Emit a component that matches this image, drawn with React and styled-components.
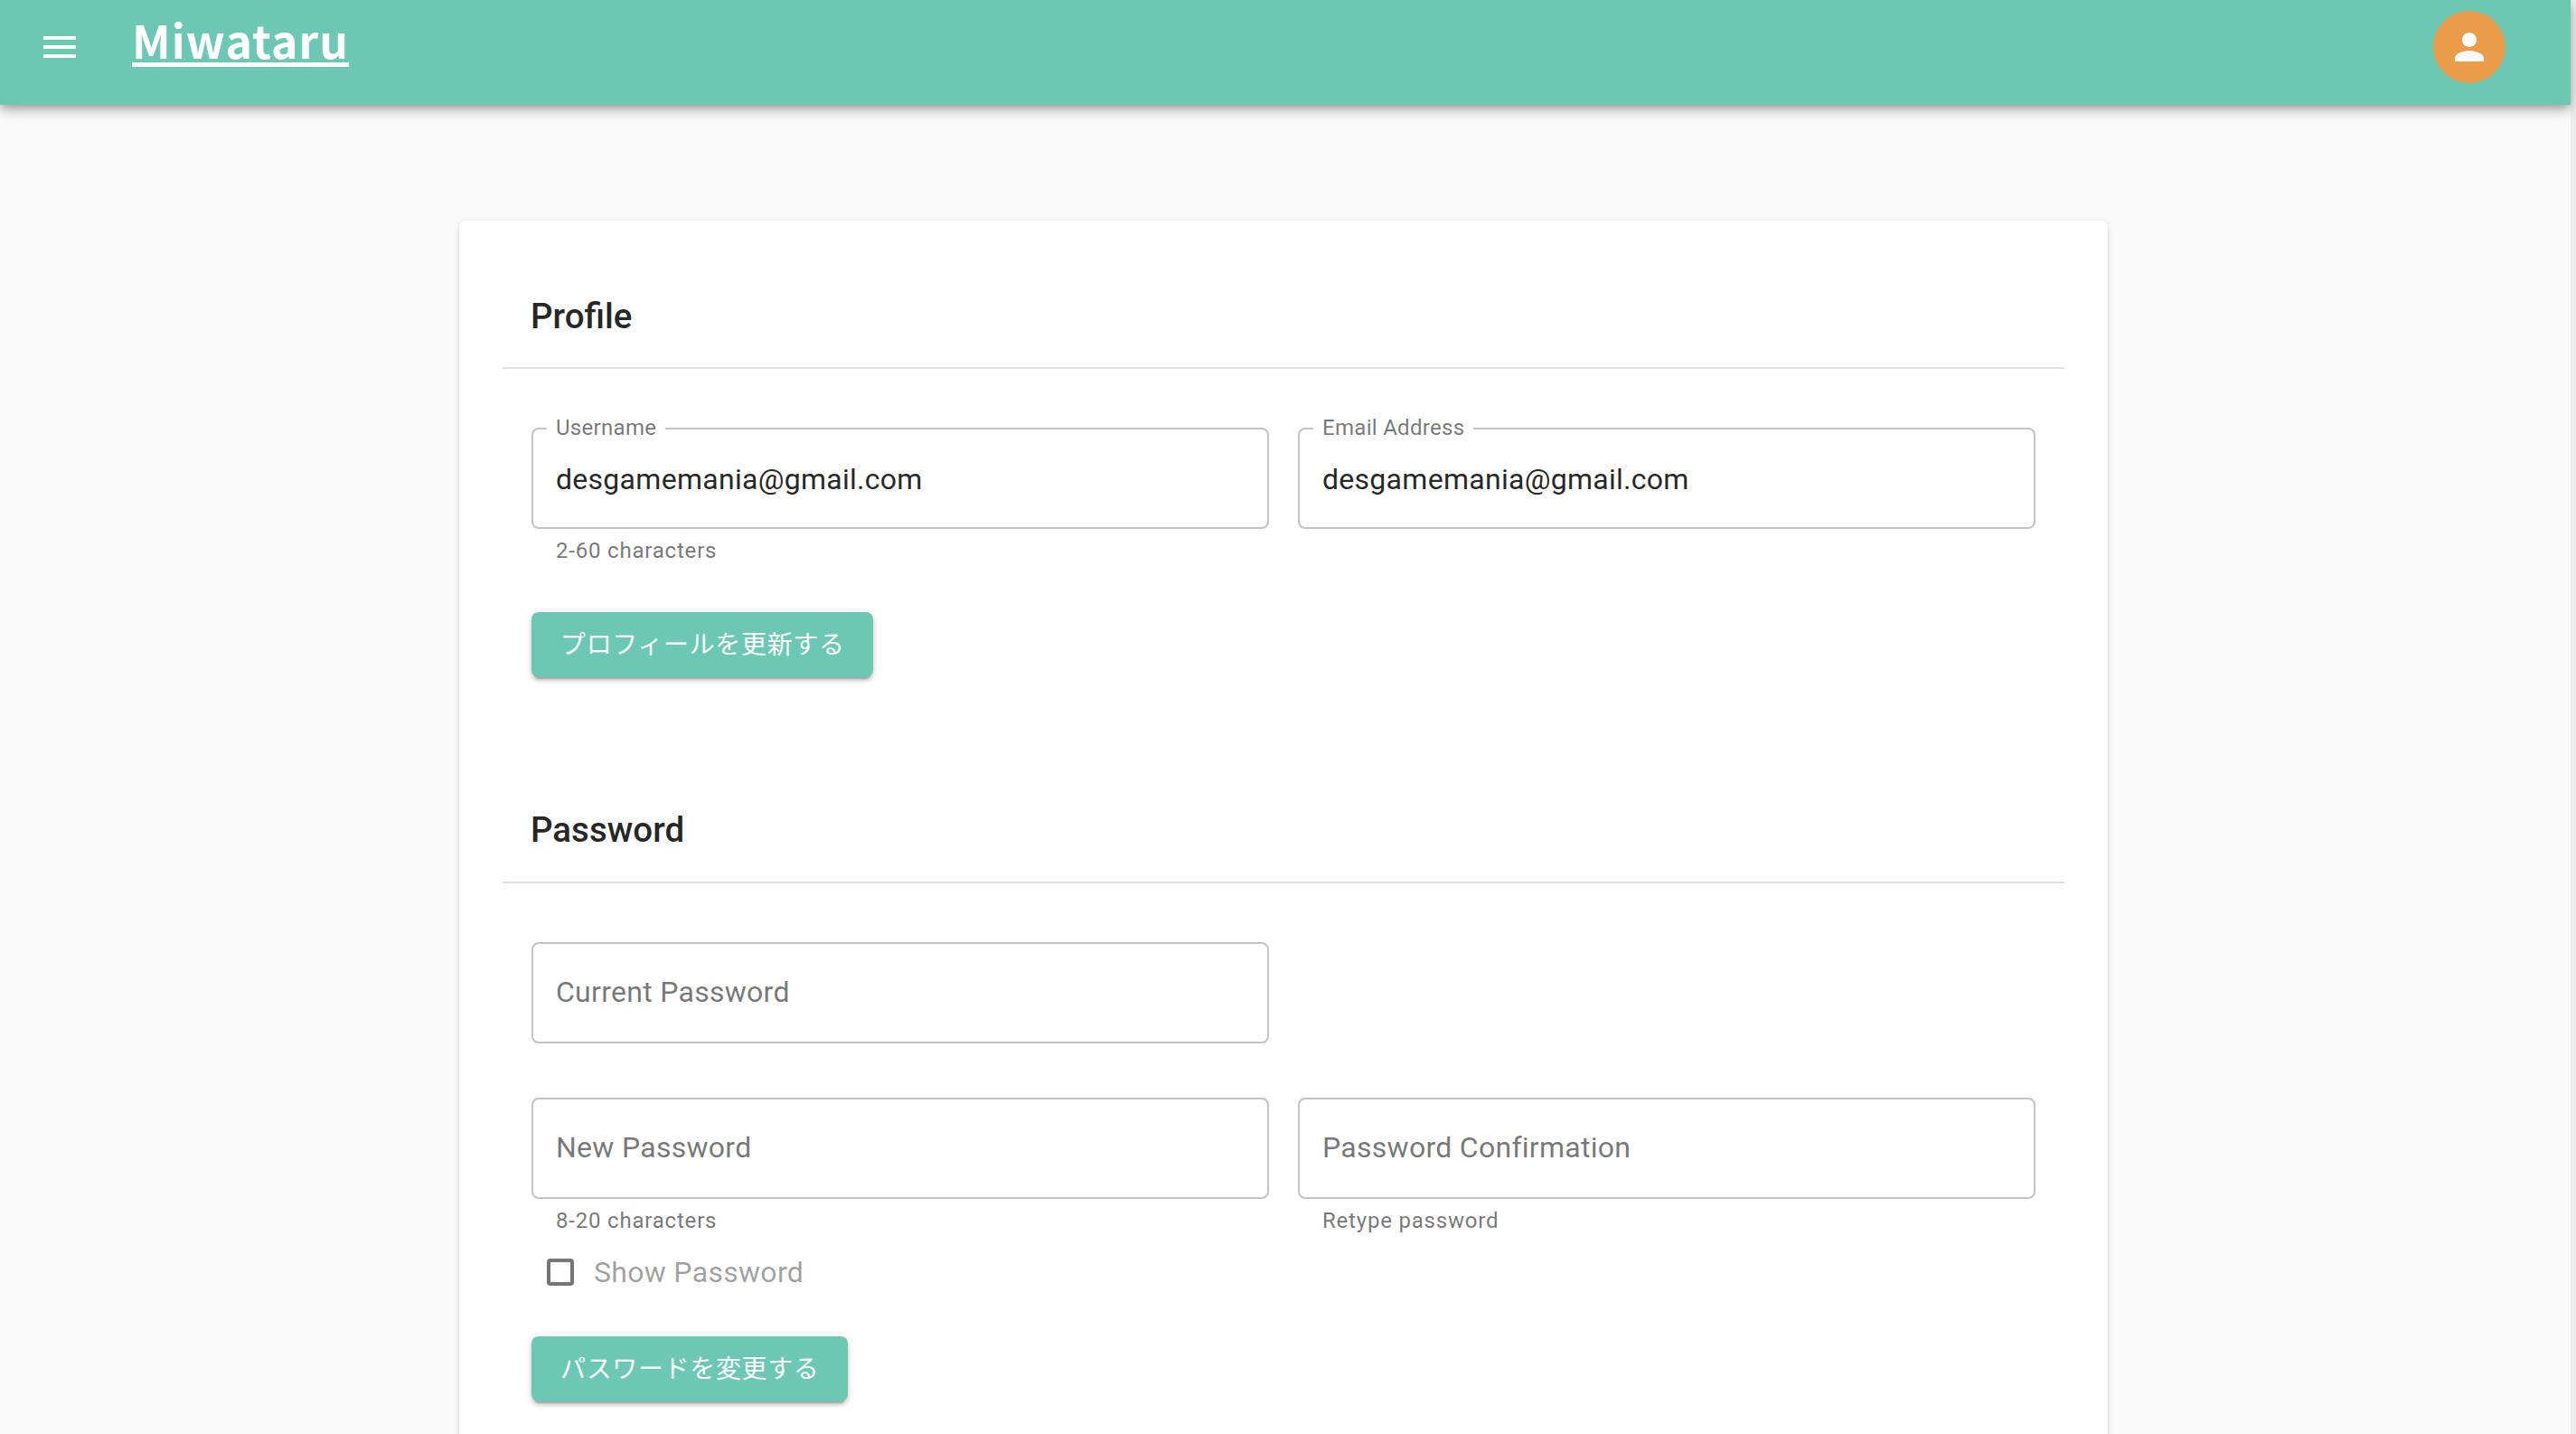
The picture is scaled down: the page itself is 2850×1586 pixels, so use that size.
import React from "react";
import styled, { createGlobalStyle } from "styled-components";

const GlobalStyle = createGlobalStyle`
  html, body {
    margin: 0;
    height: 100%;
    overflow: hidden;
    background: #fafafa;
    font-family: Roboto, "Noto Sans CJK JP", sans-serif;
  }
  * { box-sizing: border-box; }
`;

const MenuIcon = () => (
  <svg width="48" height="48" viewBox="0 0 24 24" fill="#fff">
    <path d="M3 18h18v-2H3v2zm0-5h18v-2H3v2zm0-7v2h18V6H3z" />
  </svg>
);

const PersonIcon = () => (
  <svg width="48" height="48" viewBox="0 0 24 24" fill="#fafafa">
    <path d="M12 12c2.21 0 4-1.79 4-4s-1.79-4-4-4-4 1.79-4 4 1.79 4 4 4zm0 2c-2.67 0-8 1.34-8 4v2h16v-2c0-2.66-5.33-4-8-4z" />
  </svg>
);

const TextField = ({ label, value, placeholder, helper }) => (
  <Field>
    <InputBox>
      <Input defaultValue={value} placeholder={placeholder} />
      {label ? <FloatLabel>{label}</FloatLabel> : null}
    </InputBox>
    {helper ? <Helper>{helper}</Helper> : null}
  </Field>
);

export default function App() {
  return (
    <Page>
      <GlobalStyle />
      <Main>
        <Header>
          <MenuButton aria-label="menu">
            <MenuIcon />
          </MenuButton>
          <Logo href="#">Miwataru</Logo>
          <Avatar>
            <PersonIcon />
          </Avatar>
        </Header>
        <Card>
          <SectionTitle>Profile</SectionTitle>
          <Divider $top={24} />
          <FieldRow>
            <TextField label="Username" value="desgamemania@gmail.com" helper="2-60 characters" />
            <TextField label="Email Address" value="desgamemania@gmail.com" />
          </FieldRow>
          <Actions $top={52}>
            <PrimaryButton>プロフィールを更新する</PrimaryButton>
          </Actions>

          <SectionTitle $top={137}>Password</SectionTitle>
          <Divider $top={25} />
          <FieldRow>
            <TextField placeholder="Current Password" />
          </FieldRow>
          <FieldRow $top={60}>
            <TextField placeholder="New Password" helper="8-20 characters" />
            <TextField placeholder="Password Confirmation" helper="Retype password" />
          </FieldRow>
          <CheckRow>
            <CheckBox type="checkbox" id="show-password" />
            <CheckLabel htmlFor="show-password">Show Password</CheckLabel>
          </CheckRow>
          <Actions $top={47}>
            <PrimaryButton>パスワードを変更する</PrimaryButton>
          </Actions>
        </Card>
      </Main>
      <Gutter />
    </Page>
  );
}

const Page = styled.div`
  display: flex;
  width: 2850px;
  height: 1586px;
  overflow: hidden;
`;

const Main = styled.div`
  width: 2844px;
  flex: none;
  background: #fafafa;
`;

const Gutter = styled.div`
  width: 6px;
  flex: none;
  background: #ededed;
`;

const Header = styled.header`
  position: relative;
  z-index: 2;
  display: flex;
  align-items: flex-start;
  height: 116px;
  padding: 0 72px 0 42px;
  background: #6cc8b5;
  box-shadow: 0 4px 8px -2px rgba(0, 0, 0, 0.2), 0 8px 10px 0 rgba(0, 0, 0, 0.14),
    0 2px 20px 0 rgba(0, 0, 0, 0.12);
`;

const MenuButton = styled.button`
  display: flex;
  width: 48px;
  height: 48px;
  margin-top: 28px;
  padding: 0;
  border: 0;
  background: none;
`;

const Logo = styled.a`
  margin: 7px 0 0 56px;
  color: #fff;
  font-family: "Noto Sans CJK JP", sans-serif;
  font-size: 50px;
  font-weight: 700;
  line-height: 72px;
  letter-spacing: 1px;
  text-decoration: underline;
  text-decoration-thickness: 5px;
  text-underline-offset: 4px;
`;

const Avatar = styled.div`
  display: flex;
  align-items: center;
  justify-content: center;
  width: 80px;
  height: 80px;
  margin: 12px 0 0 auto;
  border-radius: 50%;
  background: #e99c4a;
`;

const Card = styled.main`
  width: 1824px;
  min-height: 1700px;
  margin: 128px 0 0 508px;
  padding: 74px 48px 0;
  border-radius: 8px;
  background: #fff;
  box-shadow: 0 2px 6px 0 rgba(0, 0, 0, 0.14), 0 2px 2px 0 rgba(0, 0, 0, 0.07);
`;

const SectionTitle = styled.h2`
  margin: ${(props) => props.$top || 0}px 0 0;
  padding-left: 31px;
  color: rgba(0, 0, 0, 0.87);
  font-size: 38.5px;
  font-weight: 500;
  line-height: 64px;
`;

const Divider = styled.hr`
  height: 2px;
  margin: ${(props) => props.$top}px 0 65px;
  border: 0;
  background: #e0e0e0;
`;

const FieldRow = styled.div`
  display: grid;
  grid-template-columns: 816px 816px;
  column-gap: 32px;
  margin-top: ${(props) => props.$top || 0}px;
  padding-left: 32px;
`;

const Field = styled.div`
  display: flex;
  flex-direction: column;
`;

const InputBox = styled.div`
  position: relative;
  height: 112px;
`;

const Input = styled.input`
  width: 100%;
  height: 100%;
  padding: 2px 25px 0;
  border: 2px solid #c4c4c4;
  border-radius: 8px;
  outline: none;
  background: #fff;
  color: rgba(0, 0, 0, 0.87);
  font-family: Roboto, sans-serif;
  font-size: 32px;
  letter-spacing: 0.28px;

  &:placeholder-shown {
    padding: 0 25px 2px;
  }

  &::placeholder {
    color: rgba(0, 0, 0, 0.55);
    opacity: 1;
  }
`;

const FloatLabel = styled.label`
  position: absolute;
  top: -14px;
  left: 17px;
  padding: 0 10px;
  background: #fff;
  color: rgba(0, 0, 0, 0.55);
  font-size: 24px;
  line-height: 28px;
  letter-spacing: 0.3px;
`;

const Helper = styled.p`
  margin: 8px 0 0 27px;
  color: rgba(0, 0, 0, 0.55);
  font-size: 24px;
  line-height: 32px;
  letter-spacing: 0.8px;
`;

const Actions = styled.div`
  display: flex;
  margin-top: ${(props) => props.$top}px;
  padding-left: 32px;
`;

const PrimaryButton = styled.button`
  height: 72px;
  padding: 0 31px 4px 32px;
  border: 0;
  border-radius: 8px;
  background: #6cc8b5;
  box-shadow: 0 6px 2px -4px rgba(0, 0, 0, 0.2), 0 4px 4px 0 rgba(0, 0, 0, 0.14),
    0 2px 10px 0 rgba(0, 0, 0, 0.12);
  color: #fff;
  font-family: Roboto, "Noto Sans CJK JP", sans-serif;
  font-size: 28px;
  letter-spacing: 0.65px;
`;

const CheckRow = styled.div`
  display: flex;
  align-items: center;
  height: 48px;
  margin-top: 17px;
  padding-left: 49px;
`;

const CheckBox = styled.input`
  appearance: none;
  width: 30px;
  height: 30px;
  margin: 0 22px 0 0;
  border: 4px solid #757575;
  border-radius: 4px;
`;

const CheckLabel = styled.label`
  color: rgba(0, 0, 0, 0.38);
  font-size: 32px;
  letter-spacing: 0.3px;
`;
